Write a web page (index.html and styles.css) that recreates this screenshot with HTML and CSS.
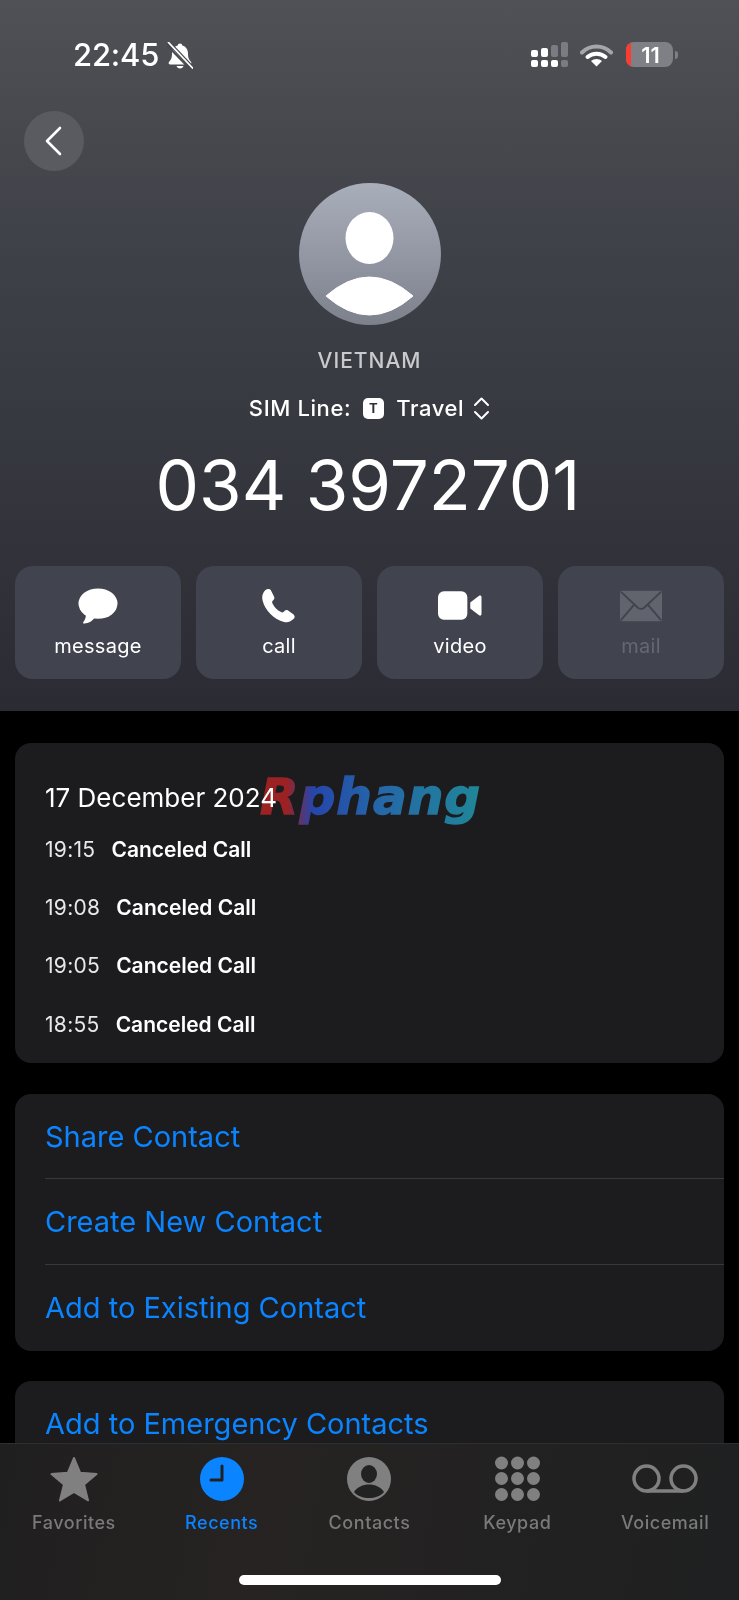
FILE: index.html
```html
<!DOCTYPE html>
<html lang="en">
<head>
  <meta charset="UTF-8" />
  <title>Recents - VIETNAM</title>
  <link rel="stylesheet" href="styles.css">
</head>
<body>

<div class="hero">
  <div class="status-bar">
    <div class="status-left">
      <span class="clock">22:45</span>
      <svg class="bell" width="26" height="27" viewBox="0 0 26 27">
        <path d="M13 1.500c1.300 0 2.200 .9 2.300 2 3.700 1 5.700 4 5.700 8 0 4.500 1 6 3 8.500 .8 1 .2 2.500-1.200 2.500H3.200C1.800 22.500 1.200 21 2 20c2-2.500 3-4 3-8.500 0-4 2-7 5.700-8 .1-1.100 1-2 2.300-2z" fill="#fff"/>
        <path d="M9.500 24h7c-.4 1.500-1.900 2.500-3.500 2.500s-3.100-1-3.500-2.500z" fill="#fff"/>
        <path d="M0 3.500L22 26" stroke="#47494f" stroke-width="1.800"/>
        <path d="M1.500 .5L25.500 26" stroke="#47494f" stroke-width="4"/>
        <path d="M1.500 .5L25.500 26" stroke="#fff" stroke-width="1.800" stroke-linecap="round"/>
      </svg>
    </div>
    <div class="status-right">
      <svg width="38" height="26" viewBox="0 0 38 26">
        <rect x="0" y="8" width="7" height="7" rx="2" fill="#fff"/>
        <rect x="10" y="6" width="7" height="9" rx="2" fill="#fff"/>
        <rect x="20" y="3" width="7" height="12" rx="2" fill="#7b7c81"/>
        <rect x="30" y="0" width="7" height="15" rx="2" fill="#7b7c81"/>
        <rect x="0" y="18" width="7" height="7" rx="2" fill="#fff"/>
        <rect x="10" y="18" width="7" height="7" rx="2" fill="#fff"/>
        <rect x="20" y="18" width="7" height="7" rx="2" fill="#fff"/>
        <rect x="30" y="18" width="7" height="7" rx="2" fill="#7b7c81"/>
      </svg>
      <svg class="wifi" width="33" height="24" viewBox="0 0 33 24">
        <path d="M2 9.500C10 1.500 23 1.500 31 9.500" fill="none" stroke="#a5a6a9" stroke-width="4" stroke-linecap="round"/>
        <path d="M7.500 14C12.500 9.500 20.500 9.500 25.500 14" fill="none" stroke="#fff" stroke-width="4" stroke-linecap="round"/>
        <path d="M16.500 23.500l-5.500-5.500c3-2.700 8-2.700 11 0z" fill="#fff"/>
      </svg>
      <div class="battery">
        <div class="battery-red"></div>
        <span>11</span>
      </div>
      <div class="battery-nub"></div>
    </div>
  </div>

  <div class="back-btn">
    <svg width="18" height="30" viewBox="0 0 18 30">
      <path d="M16 2L3 15l13 13" fill="none" stroke="#fff" stroke-width="2.600" stroke-linecap="round" stroke-linejoin="round"/>
    </svg>
  </div>

  <div class="contact">
    <svg class="avatar" width="142" height="142" viewBox="0 0 142 142">
      <defs>
        <linearGradient id="avatar-fill" x1="0" y1="0" x2="0" y2="1">
          <stop offset="0" stop-color="#a9aebb"/>
          <stop offset="1" stop-color="#7d818c"/>
        </linearGradient>
      </defs>
      <circle cx="71" cy="71" r="71" fill="url(#avatar-fill)"/>
      <ellipse cx="70.500" cy="55" rx="24" ry="26" fill="#fff"/>
      <path d="M27 113Q70.500 75 114 113Q70.500 151 27 113z" fill="#fff" stroke="#fff" stroke-width="1" stroke-linejoin="round"/>
    </svg>
    <div class="contact-name">VIETNAM</div>
    <div class="sim-line">
      <span>SIM Line:</span>
      <span class="sim-badge">T</span>
      <span>Travel</span>
      <svg class="sim-chevrons" width="17" height="23" viewBox="0 0 17 23">
        <path d="M2 8l6.500-6.500L15 8M2 15l6.500 6.500L15 15" fill="none" stroke="#fff" stroke-width="2" stroke-linecap="round" stroke-linejoin="round"/>
      </svg>
    </div>
    <div class="phone-number">034 3972701</div>
  </div>

  <div class="actions">
    <div class="action">
      <svg width="40" height="38" viewBox="0 0 42 38">
        <ellipse cx="21" cy="16.500" rx="20.500" ry="16" fill="#fff"/>
        <path d="M8 25c1 5-.5 8.500-2.500 11-.5 1 .2 1.600 1.200 1.500 4.500-.5 8-2.500 10.500-6z" fill="#fff"/>
      </svg>
      <span>message</span>
    </div>
    <div class="action">
      <svg width="34" height="35" viewBox="0 0 34 35">
        <path d="M3 2C5 0 8 0 9 2L12 8C13 10 12 11 10.500 12.500C10 13 10 14 10.500 15C12.500 19 15 21.500 19 23.500C20 24 21 24 21.500 23.500C23 22 24 21 26 22L31 25.500C33 27 33 29 32 30C29 33 26 34.500 22 33.500C12 31 3 22 .6 12C-.4 8 .6 4.500 3 2z" fill="#fff"/>
      </svg>
      <span>call</span>
    </div>
    <div class="action">
      <svg width="44" height="30" viewBox="0 0 45 30">
        <rect x="0" y="0" width="30" height="29" rx="6" fill="#fff"/>
        <path d="M33 11.500L42 4.500c1.200-.8 2.500-.2 2.500 1.200v17.600c0 1.400-1.300 2-2.500 1.200L33 17.500z" fill="#fff"/>
      </svg>
      <span>video</span>
    </div>
    <div class="action action-off">
      <svg width="42" height="31" viewBox="0 0 43 31">
        <rect x="0" y="0" width="43" height="31" rx="2" fill="#61636d"/>
        <path d="M1 1L18 17c2 1.800 5 1.800 7 0L42 1M1 30L14.500 14M42 30L28.500 14" fill="none" stroke="#41434e" stroke-width="2"/>
      </svg>
      <span>mail</span>
    </div>
  </div>
</div>

<div class="lists">
  <div class="card history">
    <div class="history-date">17 December 2024</div>
    <div class="history-row"><span class="history-time">19:15</span><span class="history-type">Canceled Call</span></div>
    <div class="history-row"><span class="history-time">19:08</span><span class="history-type">Canceled Call</span></div>
    <div class="history-row"><span class="history-time">19:05</span><span class="history-type">Canceled Call</span></div>
    <div class="history-row"><span class="history-time">18:55</span><span class="history-type">Canceled Call</span></div>
  </div>

  <div class="card">
    <div class="link-row">Share Contact</div>
    <div class="link-row">Create New Contact</div>
    <div class="link-row">Add to Existing Contact</div>
  </div>

  <div class="card">
    <div class="link-row">Add to Emergency Contacts</div>
  </div>
</div>

<!-- watermark sits over the first card -->
<div class="watermark">Rphang</div>

<div class="tab-bar">
  <div class="tab">
    <svg width="48" height="46" viewBox="0 0 50 48">
      <path d="M25 2l6.500 15.500 17 1.300-13 11 4.200 16.500L25 37.500 10.300 46.300l4.200-16.500-13-11 17-1.300z" fill="#808080" stroke="#808080" stroke-width="2" stroke-linejoin="round"/>
    </svg>
    <span>Favorites</span>
  </div>
  <div class="tab tab-on">
    <svg width="44" height="44" viewBox="0 0 44 44">
      <circle cx="22" cy="22" r="22" fill="#0a84ff"/>
      <path d="M22 9v14H11" fill="none" stroke="#1f2125" stroke-width="3" stroke-linecap="round" stroke-linejoin="round"/>
    </svg>
    <span>Recents</span>
  </div>
  <div class="tab">
    <svg width="44" height="44" viewBox="0 0 44 44">
      <circle cx="22" cy="22" r="22" fill="#808080"/>
      <ellipse cx="22" cy="17" rx="8" ry="9" fill="#222"/>
      <path d="M7 35c3-5 9-7.500 15-7.500S34 30 37 35c-3.500 4-9 6-15 6S10.500 39 7 35z" fill="#222"/>
    </svg>
    <span>Contacts</span>
  </div>
  <div class="tab">
    <svg width="45" height="45" viewBox="0 0 45 45">
      <circle cx="6.500" cy="6.500" r="6.500" fill="#808080"/>
      <circle cx="22.500" cy="6.500" r="6.500" fill="#808080"/>
      <circle cx="38.500" cy="6.500" r="6.500" fill="#808080"/>
      <circle cx="6.500" cy="22" r="6.500" fill="#808080"/>
      <circle cx="22.500" cy="22" r="6.500" fill="#808080"/>
      <circle cx="38.500" cy="22" r="6.500" fill="#808080"/>
      <circle cx="6.500" cy="38" r="6.500" fill="#808080"/>
      <circle cx="22.500" cy="38" r="6.500" fill="#808080"/>
      <circle cx="38.500" cy="38" r="6.500" fill="#808080"/>
    </svg>
    <span>Keypad</span>
  </div>
  <div class="tab">
    <svg width="66" height="30" viewBox="0 0 66 30">
      <circle cx="14.500" cy="14.500" r="12.500" fill="none" stroke="#808080" stroke-width="3.500"/>
      <circle cx="51.500" cy="14.500" r="12.500" fill="none" stroke="#808080" stroke-width="3.500"/>
      <path d="M14.500 27h37" stroke="#808080" stroke-width="3.500"/>
    </svg>
    <span>Voicemail</span>
  </div>
  <div class="home-bar"></div>
</div>

</body>
</html>
```

FILE: styles.css
```css
* { box-sizing: border-box; }
html, body {
  margin: 0;
  padding: 0;
  background: #000;
}
body {
  position: relative;
  width: 739px;
  height: 1600px;
  overflow: hidden;
  font-family: Inter, "Liberation Sans", sans-serif;
  color: #fff;
}

/* top section */
.hero {
  height: 711px;
  padding-top: 37px;
  background: linear-gradient(180deg, #505156 0%, #3f4148 35%, #2a2b33 100%);
}
.status-bar {
  display: flex;
  align-items: center;
  justify-content: space-between;
  height: 34px;
  padding: 0 61px 0 73px;
}
.status-left {
  display: flex;
  align-items: center;
  gap: 8px;
}
.clock {
  font-size: 31px;
  font-weight: 500;
  letter-spacing: -0.2px;
}
.bell { margin-top: 2px; }
.status-right {
  display: flex;
  align-items: center;
  margin-top: 1px;
}
.wifi { margin-left: 11px; }
.battery {
  position: relative;
  display: flex;
  align-items: center;
  justify-content: center;
  width: 47px;
  height: 25px;
  margin-left: 13px;
  padding-left: 2px;
  border-radius: 8px;
  background: #7f8085;
  overflow: hidden;
  font-size: 22px;
  font-weight: 600;
}
.battery-red {
  position: absolute;
  left: 0;
  top: 0;
  bottom: 0;
  width: 5px;
  background: #ff3b30;
}
.battery-nub {
  width: 3px;
  height: 8px;
  margin-left: 2px;
  border-radius: 0 3px 3px 0;
  background: #7f8085;
}
.back-btn {
  display: flex;
  align-items: center;
  justify-content: center;
  width: 60px;
  height: 60px;
  margin: 40px 0 0 24px;
  padding-right: 3px;
  border-radius: 50%;
  background: #5a5b60;
}
.contact {
  display: flex;
  flex-direction: column;
  align-items: center;
}
.avatar { margin-top: 12px; }
.contact-name {
  margin-top: 21px;
  font-size: 21px;
  font-weight: 500;
  letter-spacing: 1px;
  line-height: 30px;
  color: #c9cacd;
}
.sim-line {
  display: flex;
  align-items: center;
  gap: 12px;
  height: 30px;
  margin-top: 17px;
  font-size: 22px;
  font-weight: 500;
  letter-spacing: .6px;
}
.sim-badge {
  display: flex;
  align-items: center;
  justify-content: center;
  width: 21px;
  height: 21px;
  border-radius: 5px;
  background: #fff;
  color: #2f3037;
  font-size: 13px;
  font-weight: 700;
}
.sim-chevrons { margin-left: -3px; }
.phone-number {
  height: 80px;
  margin: 22px 3px 0 0;
  font-size: 69px;
  line-height: 80px;
}
.actions {
  display: grid;
  grid-template-columns: repeat(4, 166px);
  gap: 15px;
  margin: 41px 0 0 15px;
}
.action {
  display: flex;
  flex-direction: column;
  align-items: center;
  height: 113px;
  padding-top: 21px;
  border-radius: 18px;
  background: #41434e;
  font-size: 20px;
  letter-spacing: .3px;
}
.action svg { height: 38px; }
.action span {
  margin-top: 7px;
  line-height: 28px;
}
.action-off span { color: #656771; }

/* lists */
.lists {
  display: flex;
  flex-direction: column;
  gap: 30.500px;
  padding: 32px 15px 0;
}
.card {
  border-radius: 16px;
  background: #1c1c1e;
}
.history {
  height: 320px;
  padding: 38px 0 0 30px;
}
.history-date {
  margin-bottom: 5px;
  font-size: 26px;
  line-height: 34px;
}
.history-row {
  display: flex;
  align-items: center;
  gap: 16px;
  height: 58.300px;
  font-size: 21px;
}
.history-time {
  color: #e8e8e9;
  letter-spacing: .3px;
}
.history-type { font-weight: 600; }
.link-row {
  height: 85.700px;
  margin-left: 30px;
  border-bottom: 1px solid #38383a;
  font-size: 29px;
  line-height: 85px;
  color: #0a84ff;
}
.link-row:last-child { border-bottom: none; }

.watermark {
  position: absolute;
  left: 260px;
  top: 762px;
  font-family: "DejaVu Sans", sans-serif;
  font-size: 50px;
  font-weight: 700;
  font-style: italic;
  letter-spacing: 1px;
  line-height: 70px;
  background: linear-gradient(90deg, #8f0606 0%, #8f0606 12%, #0a2fa0 24%, #0a559c 55%, #04788a 100%);
  -webkit-background-clip: text;
  background-clip: text;
  color: transparent;
  -webkit-text-stroke: 1.500px transparent;
  mix-blend-mode: screen;
}

/* tab bar */
.tab-bar {
  position: absolute;
  left: 0;
  right: 0;
  top: 1443px;
  bottom: 0;
  display: grid;
  grid-template-columns: repeat(5, 1fr);
  align-items: start;
  border-top: 1px solid #2e2e2e;
  background: linear-gradient(100deg, #201f1f 0%, #262322 35%, #1f2021 100%);
}
.tab {
  display: flex;
  flex-direction: column;
  align-items: center;
  color: #7a7a7a;
  font-size: 18px;
  font-weight: 500;
  letter-spacing: .55px;
}
.tab svg {
  height: 48px;
  margin-top: 11px;
}
.tab span {
  margin-top: 8px;
  line-height: 24px;
}
.tab-on { color: #0a84ff; }
.home-bar {
  position: absolute;
  left: 239px;
  bottom: 15px;
  width: 262px;
  height: 10px;
  border-radius: 5px;
  background: #fff;
}
```
